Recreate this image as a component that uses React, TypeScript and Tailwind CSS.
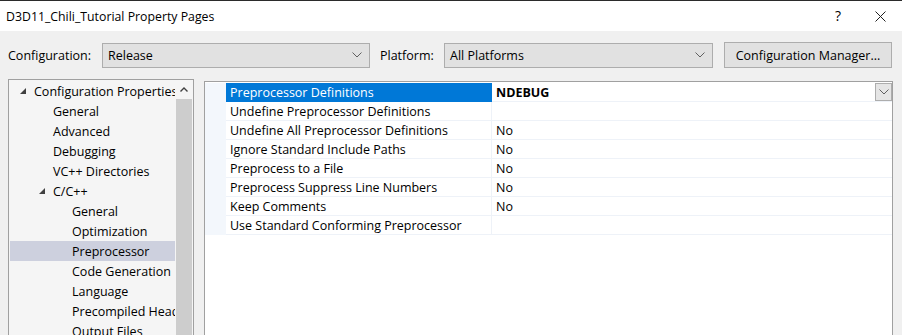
import * as React from "react";

const Chevron = ({ className }: { className?: string }) => (
  <svg width="10" height="6" viewBox="0 0 10 6" className={className}>
    <polyline points="0.5,0.5 5,5 9.5,0.5" fill="none" stroke="#606060" strokeWidth="1" />
  </svg>
);

const Expanded = () => (
  <svg width="6" height="6" viewBox="0 0 6 6">
    <polygon points="6,0 6,6 0,6" fill="#404040" />
  </svg>
);

const Combo = ({ value, width }: { value: string; width: string }) => (
  <div className={`${width} h-[25px] bg-[#e1e1e1] border border-[#adadad] flex items-center justify-between pl-[5px] pr-[7px]`}>
    <span className="pt-[2px]">{value}</span>
    <Chevron />
  </div>
);

const treeItems: { label: string; level: number; open?: boolean; selected?: boolean }[] = [
  { label: "Configuration Properties", level: 0, open: true },
  { label: "General", level: 1 },
  { label: "Advanced", level: 1 },
  { label: "Debugging", level: 1 },
  { label: "VC++ Directories", level: 1 },
  { label: "C/C++", level: 1, open: true },
  { label: "General", level: 2 },
  { label: "Optimization", level: 2 },
  { label: "Preprocessor", level: 2, selected: true },
  { label: "Code Generation", level: 2 },
  { label: "Language", level: 2 },
  { label: "Precompiled Headers", level: 2 },
  { label: "Output Files", level: 2 },
];

const props: { name: string; value: string }[] = [
  { name: "Preprocessor Definitions", value: "NDEBUG" },
  { name: "Undefine Preprocessor Definitions", value: "" },
  { name: "Undefine All Preprocessor Definitions", value: "No" },
  { name: "Ignore Standard Include Paths", value: "No" },
  { name: "Preprocess to a File", value: "No" },
  { name: "Preprocess Suppress Line Numbers", value: "No" },
  { name: "Keep Comments", value: "No" },
  { name: "Use Standard Conforming Preprocessor", value: "" },
];

const pad = ["pl-[10px]", "pl-[29px]", "pl-[48px]"];

export default function App() {
  return (
    <div className="w-[902px] h-[335px] overflow-hidden bg-[#f0f0f0] text-[12.5px] text-black font-['Open_Sans',sans-serif] leading-none">
      {/* title bar */}
      <div className="h-[31px] bg-white border-t border-[#2b2b2b] flex items-center pl-[6px]">
        <span className="text-[12.3px] pt-[2px]">D3D11_Chili_Tutorial Property Pages</span>
        <span className="ml-auto text-[14px] mr-[34px]">?</span>
        <svg width="11" height="11" viewBox="0 0 11 11" className="mr-[16px]">
          <path d="M0.5 0.5 L10.5 10.5 M10.5 0.5 L0.5 10.5" stroke="#202020" strokeWidth="1" />
        </svg>
      </div>

      {/* config toolbar */}
      <div className="h-[48px] flex items-center pl-[8px]">
        <span className="w-[94px] pt-[2px]">Configuration:</span>
        <Combo value="Release" width="w-[268px]" />
        <span className="ml-[10px] w-[64px] pt-[2px]">Platform:</span>
        <Combo value="All Platforms" width="w-[269px]" />
        <div className="ml-[11px] w-[168px] h-[26px] bg-[#e1e1e1] border border-[#adadad] flex items-center justify-center">
          <span className="pt-[2px]">Configuration Manager...</span>
        </div>
      </div>

      {/* body */}
      <div className="flex">
        <div className="ml-[8px] w-[186px] h-[260px] border border-[#a0a0a0] bg-[#f5f5f5] flex">
          <div className="w-[166px] pt-[1px] pl-[1px]">
            {treeItems.map((t, i) => (
              <div
                key={i}
                className={`h-[20px] flex items-center whitespace-nowrap overflow-hidden ${pad[t.level]} ${t.selected ? "bg-[#cdd0de]" : ""}`}
              >
                <span className="w-[14px] shrink-0 flex">{t.open ? <Expanded /> : null}</span>
                <span className="pt-[2px]">{t.label}</span>
              </div>
            ))}
          </div>
          <div className="w-[16px] ml-[1px] flex flex-col">
            <div className="h-[19px] flex items-center justify-center">
              <svg width="8" height="5" viewBox="0 0 8 5">
                <polyline points="0.5,4.5 4,1 7.5,4.5" fill="none" stroke="#404040" strokeWidth="1.4" />
              </svg>
            </div>
            <div className="flex-1 bg-[#cdcdcd]" />
          </div>
        </div>

        <div className="ml-[10px] mt-[2px] w-[689px] h-[260px] border border-[#a0a0a0] bg-white pt-[1px]">
          {props.map((p, i) => (
            <div key={i} className="flex h-[19px]">
              <div className="w-[21px] bg-[#f3f7fc]" />
              <div
                className={`w-[266px] flex items-center pl-[4px] border-b border-r ${
                  i === 0 ? "bg-[#0078d7] text-white border-[#0078d7]" : "border-[#eef2f8]"
                }`}
              >
                <span className="pt-[2px]">{p.name}</span>
              </div>
              <div className="flex-1 flex items-center pl-[4px] border-b border-[#eef2f8]">
                <span className={`pt-[2px] ${i === 0 ? "font-bold" : ""}`}>{p.value}</span>
                {i === 0 ? (
                  <div className="ml-auto w-[17px] h-[18px] bg-[#e5e5e5] border border-[#adadad] flex items-center justify-center">
                    <Chevron />
                  </div>
                ) : null}
              </div>
            </div>
          ))}
        </div>
      </div>
    </div>
  );
}
